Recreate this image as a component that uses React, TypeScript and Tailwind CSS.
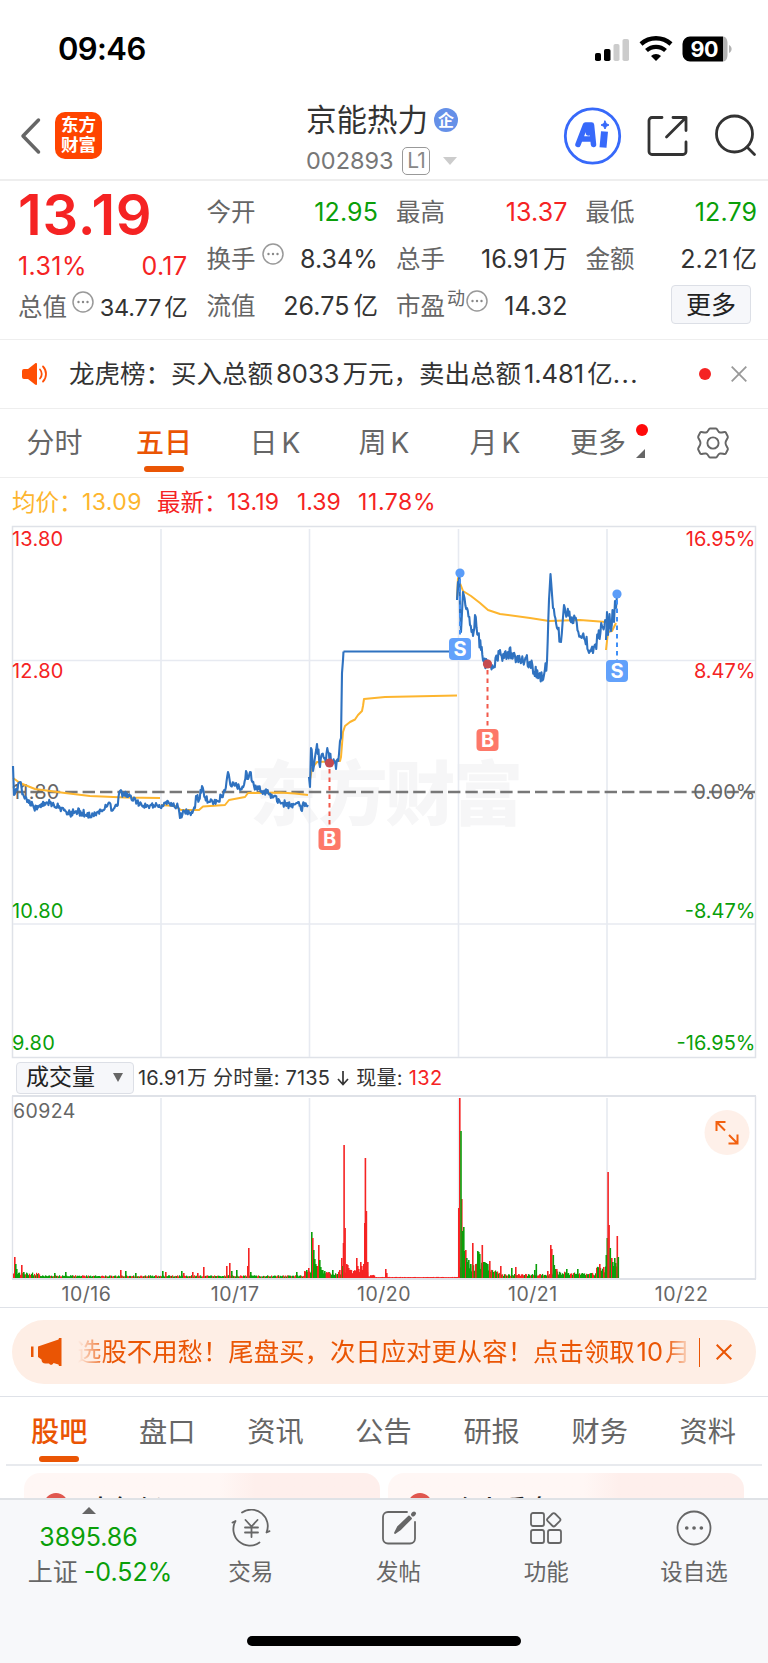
import type { ReactNode } from 'react';

type Point = [number, number];

const RED = '#f52323';
const GREEN = '#0a9f0a';

// Price lines, one list for each trading day
const priceDays: Point[][] = [
  [[13, 766], [14, 795], [16, 789], [20, 782], [23, 794], [28, 800], [34, 808], [40, 805], [50, 803], [60, 808], [70, 814], [76, 811], [82, 813], [93, 815], [103, 810], [108, 804], [113, 810], [117, 806], [120, 791], [124, 795], [130, 796], [137, 802], [146, 807], [156, 803], [160, 808]],
  [[161, 809], [165, 803], [172, 806], [178, 807], [180, 818], [184, 811], [190, 813], [195, 808], [196, 796], [199, 800], [202, 786], [205, 797], [210, 802], [218, 801], [225, 791], [228, 772], [231, 786], [236, 783], [240, 790], [244, 785], [246, 771], [248, 779], [250, 772], [254, 786], [262, 791], [274, 796], [280, 802], [290, 806], [298, 802], [302, 811], [304, 803], [308, 805]],
  [[309, 777], [310, 787], [311, 748], [313, 771], [317, 744], [320, 767], [322, 754], [325, 758], [328, 752], [332, 762], [336, 769], [339, 754], [340, 741], [341, 738], [342, 673], [343, 660], [343.5, 651.5]],
  [[457, 600], [458, 582], [459.5, 573], [460, 612], [461, 632], [463, 592], [467, 608], [470, 625], [473, 636], [475, 615], [478, 635], [481, 650], [483, 660], [487, 666], [490, 664], [494, 667], [500, 650], [504, 658], [508, 652], [515, 656], [520, 660], [530, 662], [534, 672], [539, 675], [544, 675], [547, 661], [549, 600], [550.5, 574], [553, 608], [557, 628], [561, 642], [564, 605], [567, 615], [575, 618], [580, 636], [585, 640], [593, 653], [598, 638], [602, 626], [606, 622]],
  [[606, 640], [607, 612], [608, 635], [609.5, 614], [611, 631], [612.5, 610], [614, 622], [615, 601], [616, 608], [617, 595]],
];

const averageDays: Point[][] = [
  [[13, 778], [20, 783], [35, 789], [65, 793], [90, 796], [125, 797.5], [160, 798]],
  [[161, 805], [175, 806], [181, 810], [199, 810], [203, 806.5], [225, 805], [229, 800], [245, 797], [248, 793], [280, 792.5], [295, 793.5], [308, 795]],
  [[310, 780], [312, 768], [317, 762], [340, 761], [341, 757], [343, 732], [345, 726], [350, 722], [355, 719.5], [358, 715], [362, 711], [363, 706], [364, 699], [385, 697], [457, 695.5]],
  [[457, 598], [458, 578], [463, 591], [471, 596], [480, 603], [488, 610], [500, 614], [530, 618], [549, 621], [580, 620], [606, 622]],
  [[606, 650], [608, 632], [612, 631], [616, 623]],
];

const trades = [
  { x: 329.5, dot: 763, box: 839, kind: 'B' },
  { x: 460, dot: 573, box: 649, kind: 'S' },
  { x: 487.5, dot: 664, box: 740, kind: 'B' },
  { x: 617, dot: 594, box: 671, kind: 'S' },
];

const spikes: [number, number, string][] = [
  [14, 21, RED], [15, 14, GREEN], [16, 9, GREEN], [21, 13, RED], [23, 6, GREEN], [54, 5, GREEN], [65, 6, GREEN], [120, 8, RED], [125, 7, GREEN], [135, 5, GREEN], [162, 7, GREEN],
  [165, 6, RED], [181, 7, GREEN], [183, 5, RED], [192, 6, RED], [197, 5, RED], [203, 11, RED], [226, 12, RED], [229, 15, RED], [231, 7, GREEN], [236, 8, GREEN], [247, 12, RED], [248, 30, RED], [250, 6, GREEN],
  [296, 6, GREEN], [304, 7, RED], [306, 8, GREEN], [308, 10, RED], [311, 46, GREEN], [312, 40, RED], [313, 28, GREEN], [314, 19, GREEN], [315, 14, GREEN], [316, 12, GREEN], [317, 12, RED], [318, 33, RED], [319, 18, GREEN],
  [320, 11, GREEN], [321, 8, GREEN], [322, 8, GREEN], [324, 7, GREEN], [329, 5, RED], [332, 8, GREEN], [339, 8, RED], [341, 20, RED], [342, 12, GREEN], [342.7, 35, RED], [343.3, 133, RED], [344.3, 50, RED], [346, 14, RED],
  [347, 13, RED], [348, 10, RED], [349, 8, RED], [351, 5, RED], [353, 7, RED], [356, 20, RED], [357, 12, RED], [358, 9, RED], [360, 16, RED], [361, 12, RED], [363, 14, RED], [364, 55, RED], [364.6, 120, RED], [365.6, 67, RED],
  [367, 16, RED], [385, 9, RED], [386, 5, RED], [458, 70, RED], [459, 180, RED], [461, 79, RED], [460.2, 147, GREEN], [462, 47, GREEN], [463, 51, GREEN], [464, 27, GREEN], [465, 28, RED], [466, 20, GREEN], [467, 16, GREEN], [468, 18, GREEN], [470, 14, GREEN],
  [472, 35, RED], [475, 14, RED], [477, 27, GREEN], [478, 26, GREEN], [479, 24, GREEN], [481.5, 33, RED], [483, 16, GREEN], [484, 16, GREEN], [485, 15, GREEN], [487, 14, GREEN], [489, 17, RED], [500, 12, RED], [511, 10, GREEN], [515, 11, RED], [534, 8, GREEN],
  [535.5, 14, GREEN], [547, 7, RED], [550, 33, RED], [551, 29, RED], [552.5, 23, GREEN], [553.5, 13, GREEN], [554.5, 9, GREEN], [556, 9, RED], [566, 9, GREEN], [577, 9, GREEN], [599, 14, RED], [603, 11, RED], [605.5, 23, GREEN], [606.5, 40, GREEN],
  [607.3, 106, RED], [608.3, 53, RED], [609.5, 30, GREEN], [611, 20, RED], [612, 16, GREEN], [613, 12, GREEN], [614, 20, GREEN], [615, 15, GREEN], [616.5, 42, RED], [617.5, 21, GREEN],
];

// Small repeatable pseudo random value between 0 and 1
const noise = (n: number) => {
  const v = Math.sin(n * 12.9898) * 43758.5453;
  return v - Math.floor(v);
};

const straight = (points: Point[]) => points.map(([x, y]) => `${x},${y}`).join(' ');

const jagged = (points: Point[], day: number) => {
  const out: string[] = [];
  for (let i = 0; i < points.length - 1; i++) {
    const [x0, y0] = points[i];
    const [x1, y1] = points[i + 1];
    const steps = Math.max(1, Math.round((x1 - x0) / 0.8));
    const amp = Math.abs(y1 - y0) > 25 ? 2 : day > 1 ? 13 : 7;
    out.push(`${x0},${y0}`);
    for (let s = 1; s < steps; s++) {
      const t = s / steps;
      const x = x0 + (x1 - x0) * t;
      out.push(`${x.toFixed(1)},${(y0 + (y1 - y0) * t + (noise(x) - 0.5) * amp).toFixed(1)}`);
    }
  }
  out.push(points[points.length - 1].join(','));
  return out.join(' ');
};

const baseVolume = (x: number) => {
  if (x < 40) return 5;
  if (x < 305) return 2.2;
  if (x < 345) return 6;
  if (x < 368) return 8;
  if (x < 375) return 2.5;
  if (x < 458) return 0.5;
  if (x < 490) return 15;
  if (x < 500) return 8;
  if (x < 550) return 3.5;
  if (x < 565) return 6;
  if (x < 596) return 5;
  return 11;
};

const greenShare = (x: number) => {
  if (x > 344 && x < 458) return 0;
  if (x > 458 && x < 490) return 0.9;
  if (x > 310 && x < 340) return 0.75;
  return 0.65;
};

const bars = Array.from({ length: 605 }, (_, i) => {
  const x = 13 + i;
  return {
    x,
    h: 0.6 + baseVolume(x) * (0.4 + noise(x * 1.7) * 0.6),
    color: noise(x * 3.1) < greenShare(x) ? GREEN : RED,
  };
});

const DotsIcon = () => (
  <svg viewBox="0 0 22 22" className="h-[22px] w-[22px] shrink-0">
    <circle cx="11" cy="11" r="10" fill="none" stroke="#999" strokeWidth="1.5" />
    <circle cx="6.5" cy="11" r="1.2" fill="#888" />
    <circle cx="11" cy="11" r="1.2" fill="#888" />
    <circle cx="15.5" cy="11" r="1.2" fill="#888" />
  </svg>
);

const StatusBar = () => (
  <div className="flex h-[97px] items-center justify-between pr-9 pl-[58px]">
    <span className="mt-[2px] text-[31px] font-semibold tracking-[-0.6px] text-black">09:46</span>
    <svg viewBox="0 0 137 28" className="h-7 w-[137px]">
      <rect x="0" y="18" width="6" height="8" rx="1.8" />
      <rect x="9" y="14" width="6.5" height="12" rx="1.8" />
      <rect x="18.5" y="9" width="6" height="17" rx="1.8" fill="#ccc" />
      <rect x="27.5" y="4" width="6.5" height="22" rx="1.8" fill="#ccc" />
      <path d="M46 9a22.500 22.500 0 0 1 30 0" fill="none" stroke="#000" strokeWidth="4.400" />
      <path d="M51.500 15.500a14 14 0 0 1 19 0" fill="none" stroke="#000" strokeWidth="4.200" />
      <path d="M56 21a7.300 7.300 0 0 1 10 0l-5 5z" />
      <path d="M95 1.500h33v25H95a7.500 7.500 0 0 1-7.500-7.500V9A7.500 7.500 0 0 1 95 1.500z" />
      <path d="M128 1.500c3 0 4.500 3 4.500 7v11c0 4-1.500 7-4.500 7z" fill="#b3b3b3" />
      <path d="M134 10c3.500 1.500 3.500 6.500 0 8z" fill="#b3b3b3" />
      <text x="109.500" y="21.500" textAnchor="middle" fontSize="21.500" fontWeight="700" textLength="28" fill="#fff">90</text>
    </svg>
  </div>
);

const Header = () => (
  <header className="relative flex h-[84px] items-center justify-between border-b-2 border-[#eeeeee] pl-5">
    <div className="mt-[-4px] flex items-center gap-[13px]">
      <svg viewBox="0 0 22 38" className="h-[38px] w-[22px]" fill="none" stroke="#666" strokeWidth="3.5" strokeLinecap="round" strokeLinejoin="round">
        <path d="M18.500 3 3 19l15.500 16" />
      </svg>
      <div className="mt-[-2px] flex h-[47px] w-[47px] flex-col items-center justify-center rounded-[10px] bg-[#ff4400] text-[17.5px] leading-[20px] font-bold text-white">
        <span>东方</span>
        <span>财富</span>
      </div>
    </div>
    <div className="absolute top-0 left-[306px]">
      <div className="flex h-[46px] items-center gap-[6px] text-[30.5px] text-[#333]">
        <span>京能热力</span>
        <span className="flex h-6 w-6 items-center justify-center rounded-full bg-[#6590e8] text-[16px] font-bold text-white">企</span>
      </div>
      <div className="flex h-9 items-center text-[23.5px] text-[#777]">
        <span className="w-24">002893</span>
        <span className="flex h-7 w-7 items-center justify-center rounded-[5px] border border-[#999] text-[21px] tracking-[-1px] text-[#888]">L1</span>
        <svg viewBox="0 0 14 8" className="ml-[13px] h-2 w-[14px]"><path d="M0 0h14L7 8z" fill="#ccc" /></svg>
      </div>
    </div>
    <svg viewBox="560 102 208 72" className="h-[72px] w-52" fill="none" stroke="#333" strokeWidth="2.8" strokeLinecap="round" strokeLinejoin="round">
      <circle cx="592.500" cy="136" r="27.200" stroke="#3769fa" />
      <path d="M578 144.500 585.500 125h6l2 19.500M583 139h8M588.500 127v6" stroke="#3769fa" strokeWidth="5.500" />
      <path d="M604.500 131.500l-1.500 16" stroke="#3769fa" strokeWidth="7" strokeLinecap="butt" />
      <path d="M605 121l1.300 2.700L609 125l-2.700 1.300L605 129l-1.300-2.700L601 125l2.700-1.300z" fill="#3769fa" stroke="#3769fa" strokeWidth="1" />
      <path d="M662 117.500h-10a3 3 0 0 0-3 3v31a3 3 0 0 0 3 3h31a3 3 0 0 0 3-3v-9.500M673 117.500h13v13M686 117.500 666.500 137" />
      <circle cx="734.500" cy="134" r="18" />
      <path d="m747 147 7.500 7.500" />
    </svg>
  </header>
);

interface StatProps {
  label: ReactNode;
  value: string;
  unit?: string;
  tone?: string;
}

const Stat = ({ label, value, unit, tone = 'text-[#333]' }: StatProps) => (
  <div className="flex h-[47px] items-center justify-between">
    <span className="-ml-px flex items-center text-[24.5px] text-[#666]">{label}</span>
    <span className={`-mr-px text-[25px] tracking-[0.1px] ${tone}`}>
      {value}
      {unit && <span className="ml-[4px] text-[24.5px] tracking-normal">{unit}</span>}
    </span>
  </div>
);

const Quote = () => (
  <section className="grid h-[159px] grid-cols-4 gap-x-5 border-b border-[#eeeeee] pt-2 pr-[12px] pl-[18px] whitespace-nowrap">
    <div>
      <div className="h-[55px] text-[56px] leading-[52px] font-semibold tracking-[0.8px] text-[#f52323]">13.19</div>
      <div className="flex h-[46px] items-center justify-between text-[25px] tracking-[0.4px] text-[#f52323]">
        <span>1.31%</span>
        <span>0.17</span>
      </div>
      <div className="flex h-[35px] items-center justify-between text-[24.5px] text-[#666]">
        <span>总值</span>
        <span className="-mt-3"><DotsIcon /></span>
        <span className="text-[23.5px] tracking-[-0.2px] text-[#333]">34.77<span className="ml-[3px]">亿</span></span>
      </div>
    </div>
    <div>
      <Stat label="今开" value="12.95" tone="text-[#0a9f0a]" />
      <Stat label={<>换手<span className="-mt-3 ml-[6px]"><DotsIcon /></span></>} value="8.34%" />
      <Stat label="流值" value="26.75" unit="亿" />
    </div>
    <div>
      <Stat label="最高" value="13.37" tone="text-[#f52323]" />
      <Stat label="总手" value="16.91" unit="万" />
      <Stat label={<>市盈<span className="-mt-4 ml-[2px] text-[18px]">动</span><span className="-mt-3 ml-px"><DotsIcon /></span></>} value="14.32" />
    </div>
    <div>
      <Stat label="最低" value="12.79" tone="text-[#0a9f0a]" />
      <Stat label="金额" value="2.21" unit="亿" />
      <button className="mt-[2px] mr-[5px] ml-auto flex h-[39px] w-20 items-center justify-center rounded-[4px] border border-[#dcdfe6] bg-[#f6f7fa] pt-[2px] text-[25px] text-[#222]">更多</button>
    </div>
  </section>
);

const NewsBar = () => (
  <div className="flex h-[69px] items-center border-b border-[#eeeeee] pr-[21px] pl-[22px] whitespace-nowrap">
    <svg viewBox="0 0 26 24" className="h-6 w-[26px]">
      <path d="M2 7h4l7-5.500c1-.8 2-.5 2 .8v19.400c0 1.300-1 1.600-2 .8L6 17H2a2 2 0 0 1-2-2V9a2 2 0 0 1 2-2z" fill="#ff4f05" />
      <path d="M18 7.500c2.300 2.500 2.300 6.500 0 9M21 4.500c4 4 4 11 0 15" fill="none" stroke="#ff4f05" strokeWidth="1.8" strokeLinecap="round" />
    </svg>
    <span className="ml-[21px] text-[25.5px] text-[#333]">
      龙虎榜：买入总额<span className="mx-[3px]">8033</span>万元，卖出总额<span className="mx-[3px]">1.481</span>亿<span className="tracking-[1.4px]">...</span>
    </span>
    <span className="ml-auto h-3 w-3 rounded-full bg-[#f52323]" />
    <svg viewBox="0 0 16 16" className="ml-5 h-4 w-4" stroke="#999" strokeWidth="1.8"><path d="m.7.7 14.600 14.600M15.300.7.700 15.300" /></svg>
  </div>
);

const periods = [
  { name: '分时', box: 'w-[109px]' },
  { name: '五日', box: 'w-[110px]', active: true },
  { name: '日', suffix: 'K', box: 'w-[112px]' },
  { name: '周', suffix: 'K', box: 'w-[106px]' },
  { name: '月', suffix: 'K', box: 'w-[116px]' },
];

const PeriodTabs = () => (
  <nav className="flex h-[69px] items-center border-b border-[#eeeeee] text-[28px] text-[#666]">
    {periods.map((p) => (
      <div key={p.name} className={`relative flex h-full items-center justify-center gap-[4px] ${p.box} ${p.active ? 'font-medium text-[#ea5504]' : ''}`}>
        {p.name}
        {p.suffix && <span>{p.suffix}</span>}
        {p.active && <span className="absolute bottom-[5px] h-[6px] w-10 rounded-[3px] bg-[#ea5504]" />}
      </div>
    ))}
    <div className="relative ml-[17px]">
      更多
      <span className="absolute top-[2px] -right-[22px] h-3 w-3 rounded-full bg-[#ff0a0a]" />
      <svg viewBox="0 0 9 9" className="absolute -right-[19px] bottom-[6px] h-[9px] w-[9px]"><path d="M9 0v9H0z" fill="#666" /></svg>
    </div>
    <svg viewBox="0 0 32 32" className="ml-[71px] h-8 w-8" fill="none" stroke="#666" strokeWidth="1.9" strokeLinejoin="round">
      <path d="M13 1.500h6c1.500 0 1.500 3.500 4 4s5-1.500 5.800 0l2 4c.8 1.500-2.300 3.500-2.300 6.500s3.100 5 2.300 6.500l-2 4c-.8 1.500-3.300-.5-5.800 0s-2.500 4-4 4h-6c-1.500 0-1.500-3.500-4-4s-5 1.500-5.800 0l-2-4C.400 21 3.500 19 3.500 16s-3.100-5-2.300-6.500l2-4C4 4 6.500 6 9 5.500s2.500-4 4-4z" />
      <circle cx="16" cy="16" r="5.600" />
    </svg>
  </nav>
);

const priceLabels: [number, string, string, string][] = [
  [546, '13.80', '16.95%', RED],
  [678, '12.80', '8.47%', RED],
  [798.5, '11.80', '0.00%', '#666'],
  [918, '10.80', '-8.47%', GREEN],
  [1050, '9.80', '-16.95%', GREEN],
];

const PriceChart = () => (
  <svg viewBox="0 524 768 536" className="block h-[536px] w-full">
    <text x="250" y="820" fontSize="70" fontWeight="900" textLength="273" fill="#f6f6f7">东方财富</text>
    <rect x="12.500" y="526.500" width="743" height="531" fill="none" stroke="#dfe2e8" strokeWidth="1.5" />
    <path d="M161 529v528M309.500 529v528M458.500 529v528M607 529v528M13 660.500h742M13 924h742" stroke="#e7eaf1" strokeWidth="1.6" />
    <path d="M13 792H755" stroke="#777" strokeWidth="2.3" strokeDasharray="12.4 5" />
    {priceLabels.map(([y, price, change, color]) => (
      <g key={price} fontSize="20" fill={color}>
        <text x="12" y={y} letterSpacing="0.2">{price}</text>
        <text x="755.5" y={y} textAnchor="end">{change}</text>
      </g>
    ))}
    {averageDays.map((points, i) => (
      <polyline key={i} points={straight(points)} fill="none" stroke="#fdb52e" strokeWidth="2" strokeLinejoin="round" />
    ))}
    {priceDays.map((points, i) => (
      <polyline key={i} points={jagged(points, i)} fill="none" stroke="#2f72c0" strokeWidth="2.1" strokeLinejoin="round" />
    ))}
    <path d="M343.500 651.500H458" stroke="#2f72c0" strokeWidth="2.1" />
    {trades.map(({ x, dot, box, kind }) => {
      const color = kind === 'B' ? '#f2594b' : '#3f8ff7';
      return (
        <g key={x}>
          <path d={`M${x} ${dot + 6}V${box - 11}`} stroke={color} strokeWidth="2" strokeDasharray="4.5 4" />
          <circle cx={x} cy={dot} r="4.6" fill={kind === 'B' ? '#c64b50' : '#5a9cf8'} />
          <rect x={x - 11} y={box - 11} width="22" height="22" rx="4" fill={kind === 'B' ? '#fd7869' : '#62a1fb'} />
          <text x={x} y={box + 7} textAnchor="middle" fontSize="20" fontWeight="700" fill="#fff">{kind}</text>
        </g>
      );
    })}
  </svg>
);

const VolumeHeader = () => (
  <div className="flex h-[35px] items-center pl-4 text-[20px] whitespace-nowrap text-[#333]">
    <div className="mr-[4px] flex h-8 w-[118px] items-center justify-between rounded-[4px] border border-[#dcdfe6] bg-[#f6f7fa] pr-[10px] pl-[9px] text-[23px] text-[#222]">
      成交量
      <svg viewBox="0 0 10 9" className="h-[9px] w-[10px]"><path d="M0 0h10L5 9z" fill="#666" /></svg>
    </div>
    <span className="pt-px tracking-[0.2px]">16.91<span className="ml-[2px]">万</span> 分时量: 7135</span>
    <svg viewBox="0 0 14 16" className="mx-[6px] h-4 w-[14px]" fill="none" stroke="#333" strokeWidth="1.7"><path d="M7 1v13M2 9l5 5.500L12 9" /></svg>
    <span className="pt-px tracking-[0.3px]">现量: <span className="text-[#f52323]">132</span></span>
  </div>
);

const VolumeChart = () => (
  <svg viewBox="0 1095 768 185" className="block h-[185px] w-full">
    <path d="M12 1096h744M12 1279h744" stroke="#dfe2e8" strokeWidth="1.8" />
    <path d="M12.500 1096v183M755.500 1096v183" stroke="#dfe2e8" strokeWidth="1.4" />
    <path d="M161 1098v180M309.500 1098v180M458.500 1098v180M607 1098v180" stroke="#e7eaf1" strokeWidth="1.6" />
    <text x="13" y="1118" fontSize="19.5" letterSpacing="0.4" fill="#666">60924</text>
    {bars.map((b) => (
      <rect key={b.x} x={b.x} y={1278 - b.h} width="1.2" height={b.h} fill={b.color} />
    ))}
    {spikes.map(([x, h, color]) => (
      <rect key={x} x={x} y={1278 - h} width="1.6" height={h} fill={color} />
    ))}
    <circle cx="727" cy="1132.5" r="22.5" fill="#fef0e9" />
    <path d="M716.500 1131v-9h9M717 1122.500l8 8M737.500 1134.500v9h-9M737 1143l-8-8" fill="none" stroke="#f2600f" strokeWidth="2" />
  </svg>
);

const Promo = () => (
  <div className="flex h-[89px] items-center border-b border-[#dfe2e8] px-3">
    <div className="flex h-16 w-full items-center rounded-[32px] bg-[#feeee5] pr-6 pl-[19px] text-[#ea5504]">
      <svg viewBox="0 0 31 28" className="h-7 w-[31px] shrink-0" fill="#ea5504">
        <path d="M0 8.500h2.500v10.500H0zM7 8.500 27.500 1.500 28 0h2.500v28H28l-.5-1.500-5-1.500c-1 2.500-3.500 2-4.500.5h-3.500c-2.500 0-4-1.500-4-4L7 19z" />
      </svg>
      <div className="ml-[14px] w-[620px] overflow-hidden text-[25.4px] whitespace-nowrap [mask-image:linear-gradient(to_right,transparent_2px,black_32px,black_590px,transparent_616px)]">
        选股不用愁！尾盘买，次日应对更从容！点击领取<span className="mx-[2px]">10</span>月
      </div>
      <span className="ml-auto h-[29px] w-px shrink-0 bg-[#ea5504]" />
      <svg viewBox="0 0 16 16" className="ml-[16px] h-4 w-4 shrink-0" stroke="#ea5504" strokeWidth="2"><path d="m.7.7 14.600 14.600M15.300.7.700 15.300" /></svg>
    </div>
  </div>
);

const sections = ['股吧', '盘口', '资讯', '公告', '研报', '财务', '资料'];

const SectionTabs = () => (
  <nav className="mx-[6px] flex h-[69px] justify-between border-b-2 border-[#e8eaee] pr-[26px] pl-[25px] text-[28.2px] text-[#666]">
    {sections.map((name, i) => (
      <div key={name} className={i === 0 ? 'relative flex h-[70px] items-center justify-center font-medium text-[#ea5504]' : 'flex h-[70px] items-center'}>
        {name}
        {i === 0 && <span className="absolute bottom-[5px] h-[6px] w-10 rounded-[3px] bg-[#ea5504]" />}
      </div>
    ))}
  </nav>
);

const Cards = () => (
  <div className="flex h-8 gap-2 overflow-hidden px-6 pt-[7px]">
    {['大气候', '个人看盘'].map((title) => (
      <div key={title} className="flex h-[60px] flex-1 items-start gap-5 rounded-[16px] bg-linear-to-r from-[#fff7f5] from-55% to-[#feefec] to-65% pt-[20px] pl-5">
        <span className="h-6 w-6 rounded-full bg-[#e0574f]" />
        <span className="pt-[2px] text-[25px] leading-[28px] font-medium text-[#222]">{title}</span>
      </div>
    ))}
  </div>
);

const actions = [
  {
    name: '交易',
    icon: (
      <>
        <path d="M11 3.500a16.500 16.500 0 0 1 24.500 20l3-1.300M28.500 33.500A16.500 16.500 0 0 1 4.500 12l-3 1.500" />
        <path d="m14.500 11 6 6.500 6-6.500M20.500 17.500V28M14 18.500h13M14 23.500h13" />
      </>
    ),
  },
  {
    name: '发帖',
    icon: (
      <>
        <path d="M28 3H9a5 5 0 0 0-5 5v21.500a5 5 0 0 0 5 5h22a5 5 0 0 0 5-5V13" />
        <path d="m16 24 3-6L30 7.500l2 2-11 11z" fill="#666" />
        <path d="m34 5.500 1-1" strokeWidth="4" />
      </>
    ),
  },
  {
    name: '功能',
    icon: (
      <>
        <rect x="5" y="4" width="13" height="13" rx="2" />
        <rect x="5" y="21" width="13" height="13" rx="2" />
        <rect x="22" y="21" width="13" height="13" rx="2" />
        <rect x="22.5" y="5.5" width="10.5" height="10.5" rx="2" transform="rotate(45 27.75 10.75)" />
      </>
    ),
  },
  {
    name: '设自选',
    icon: (
      <>
        <circle cx="20" cy="19" r="16.500" />
        <path d="M12.700 19h.1M20 19h.1M27.300 19h.1" strokeWidth="3.6" />
      </>
    ),
  },
];

const BottomBar = () => (
  <footer className="h-[166px] border-t-2 border-[#dfe2e6] bg-[#f7f8fa]">
    <div className="flex h-[136px]">
      <div className="flex w-[177px] flex-col items-center pt-[7px] text-[25px] whitespace-nowrap">
        <svg viewBox="0 0 14 7" className="h-[7px] w-[14px]"><path d="M7 0l7 7H0z" fill="#666" /></svg>
        <span className="mt-[5px] h-9 leading-9 text-[#0a9f0a]">3895.86</span>
        <span className="pl-[23px] leading-[34px] text-[#666]">上证<span className="ml-[6px] text-[#0a9f0a]">-0.52%</span></span>
      </div>
      {actions.map((a) => (
        <div key={a.name} className="flex w-[147.700px] flex-col items-center pt-[9px] text-[22.5px] text-[#666]">
          <svg viewBox="0 0 40 38" className="h-[38px] w-10" fill="none" stroke="#666" strokeWidth="1.8" strokeLinecap="round" strokeLinejoin="round">{a.icon}</svg>
          <span className="mt-[9px] leading-[32px]">{a.name}</span>
        </div>
      ))}
    </div>
    <div className="mx-auto h-[10px] w-[274px] rounded-full bg-black" />
  </footer>
);

const App = () => {
  return (
    <div className="h-[1663px] w-[768px] overflow-hidden bg-white font-[Inter,'Noto_Sans_CJK_SC',sans-serif]">
      <StatusBar />
      <Header />
      <Quote />
      <NewsBar />
      <PeriodTabs />
      <div className="flex h-[46px] items-center pt-[3px] pl-3 text-[23px] whitespace-nowrap text-[#f52323]">
        <span className="w-[70px] text-[23.5px] text-[#fdb52e]">均价：</span>
        <span className="w-[75px] tracking-[0.4px] text-[#fdb52e]">13.09</span>
        <span className="w-[70px] text-[23.5px]">最新：</span>
        <span className="w-[70px] tracking-[0.2px]">13.19</span>
        <span className="w-[61px]">1.39</span>
        <span className="tracking-[0.6px]">11.78%</span>
      </div>
      <PriceChart />
      <VolumeHeader />
      <VolumeChart />
      <div className="flex h-7 items-center border-b border-[#dfe2e8] px-3 pt-[2px] text-[19.5px] text-[#666]">
        {['10/16', '10/17', '10/20', '10/21', '10/22'].map((date) => (
          <span key={date} className="flex-1 text-center tracking-[0.5px]">{date}</span>
        ))}
      </div>
      <Promo />
      <SectionTabs />
      <Cards />
      <BottomBar />
    </div>
  );
};

export default App;
